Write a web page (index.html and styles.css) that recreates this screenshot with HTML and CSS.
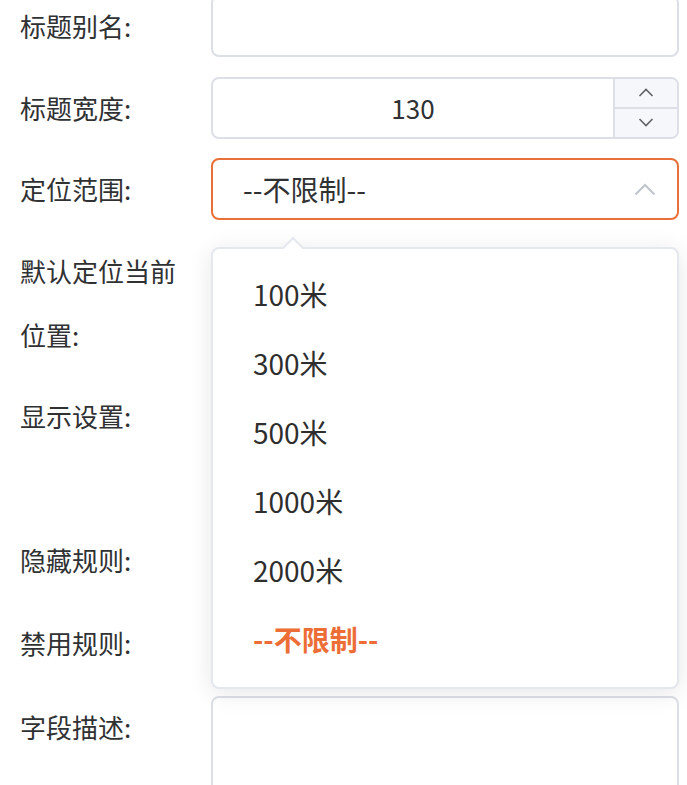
FILE: index.html
```html
<!DOCTYPE html>
<html lang="zh-CN">
<head>
<meta charset="utf-8">
<title>表单</title>
<link rel="stylesheet" href="styles.css">
</head>
<body>
<div class="form">
  <div class="row">
    <div class="label">标题别名:</div>
    <div class="control"><div class="input"></div></div>
  </div>
  <div class="row">
    <div class="label">标题宽度:</div>
    <div class="control">
      <div class="input number">
        <div class="num-value">130</div>
        <div class="spin">
          <div class="spin-btn up"><svg width="16" height="9" viewBox="0 0 16 9"><path d="M1.5 8 L8 1.5 L14.5 8" fill="none" stroke="#606266" stroke-width="1.6"/></svg></div>
          <div class="spin-btn"><svg width="16" height="9" viewBox="0 0 16 9"><path d="M1.5 1 L8 7.5 L14.5 1" fill="none" stroke="#606266" stroke-width="1.6"/></svg></div>
        </div>
      </div>
    </div>
  </div>
  <div class="row">
    <div class="label">定位范围:</div>
    <div class="control">
      <div class="select">
        <span class="select-value">--不限制--</span>
        <svg class="select-arrow" width="22" height="13" viewBox="0 0 22 13"><path d="M1.5 11.5 L11 2 L20.5 11.5" fill="none" stroke="#c0c4cc" stroke-width="2"/></svg>
      </div>
      <div class="dropdown">
        <div class="dropdown-arrow"></div>
        <div class="option">100米</div>
        <div class="option">300米</div>
        <div class="option">500米</div>
        <div class="option">1000米</div>
        <div class="option">2000米</div>
        <div class="option active">--不限制--</div>
      </div>
    </div>
  </div>
  <div class="row">
    <div class="label">默认定位当前位置:</div>
    <div class="control"></div>
  </div>
  <div class="row">
    <div class="label">显示设置:</div>
    <div class="control"><div class="slot slot-tall"></div></div>
  </div>
  <div class="row">
    <div class="label">隐藏规则:</div>
    <div class="control"><div class="slot slot-rule"></div></div>
  </div>
  <div class="row">
    <div class="label">禁用规则:</div>
    <div class="control"><div class="slot slot-rule"></div></div>
  </div>
  <div class="row">
    <div class="label">字段描述:</div>
    <div class="control"><div class="textarea"></div></div>
  </div>
</div>
</body>
</html>
```

FILE: styles.css
```css
* { box-sizing: border-box; }
html, body { margin: 0; padding: 0; background: #fff; }
body {
  font-family: "Noto Sans CJK SC", "Noto Sans", sans-serif;
  color: #303133;
  height: 785px;
  overflow: hidden;
}
.form { padding: 0 8px 0 20px; margin-top: -6px; }
.row { display: flex; align-items: flex-start; margin-bottom: 17.5px; }
.label {
  width: 191px;
  flex: none;
  padding-right: 24px;
  font-size: 26px;
  line-height: 64px;
}
.control { flex: 1; min-width: 0; padding-top: 1px; position: relative; }
.input {
  height: 62px;
  border: 2px solid #dcdfe6;
  border-radius: 8px;
  background: #fff;
}
.number { display: flex; overflow: hidden; }
.num-value {
  flex: 1;
  text-align: center;
  font-size: 26px;
  line-height: 58px;
  color: #303133;
}
.spin {
  width: 64px;
  flex: none;
  border-left: 2px solid #dcdfe6;
  background: #f5f7fa;
  display: flex;
  flex-direction: column;
}
.spin-btn { flex: 1; display: flex; align-items: center; justify-content: center; }
.spin-btn.up { border-bottom: 2px solid #dcdfe6; }
.select {
  height: 62px;
  border: 2px solid #ea7039;
  border-radius: 8px;
  display: flex;
  align-items: center;
  justify-content: space-between;
  padding: 0 21px 0 30px;
  font-size: 28px;
  color: #303133;
  background: #fff;
}
.select-value { line-height: 58px; }
.dropdown {
  position: absolute;
  top: calc(100% + 27px);
  left: 0;
  right: 0;
  background: #fff;
  border: 2px solid #e4e7ed;
  border-radius: 8px;
  box-shadow: 0 4px 24px rgba(0, 0, 0, 0.1);
  padding: 11px 0 13px;
  z-index: 10;
}
.dropdown-arrow {
  position: absolute;
  top: -9px;
  left: 72px;
  width: 16px;
  height: 16px;
  background: #fff;
  border-left: 2px solid #e4e7ed;
  border-top: 2px solid #e4e7ed;
  transform: rotate(45deg);
}
.option {
  height: 69px;
  line-height: 69px;
  padding-left: 40px;
  font-size: 28px;
  color: #2e2e2e;
}
.option.active { color: #ec6e36; font-weight: 700; }
.slot-tall { height: 125px; }
.slot-rule { height: 65px; }
.textarea {
  height: 130px;
  border: 2px solid #dcdfe6;
  border-radius: 8px;
  background: #fff;
}
```
